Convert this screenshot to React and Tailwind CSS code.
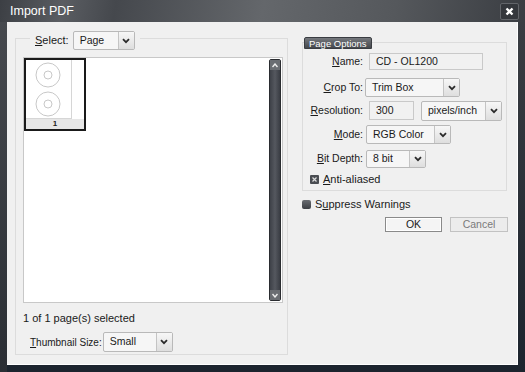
import React from "react";

const font = { fontFamily: '"Liberation Sans", Arial, sans-serif' };

const Chevron = () => (
  <svg width="8" height="6" viewBox="0 0 8 6">
    <path d="M1 1.2 L4 4.2 L7 1.2" fill="none" stroke="#2b2b2b" strokeWidth="1.8" />
  </svg>
);

const Select = ({ w, h = 19, value }) => (
  <div
    className={`flex shrink-0 ${w} border border-[#b9b9b9] bg-[#f6f6f6] rounded-[2px]`}
    style={{ height: h }}
  >
    <div className="flex-1 flex items-center pl-[6px] text-[#1a1a1a] whitespace-nowrap">{value}</div>
    <div className="w-[16px] flex items-center justify-center border-l border-[#c4c4c4] bg-gradient-to-b from-[#f7f7f7] to-[#dedede]">
      <Chevron />
    </div>
  </div>
);

const Input = ({ w, h = 19, value }) => (
  <div
    className={`flex items-center ${w} border border-[#c9c9c9] bg-[#f1f1f1] pl-[6px] text-[#1a1a1a]`}
    style={{ height: h }}
  >
    {value}
  </div>
);

const U = ({ children }) => <span className="underline underline-offset-[1px]">{children}</span>;

const Label = ({ children }) => (
  <div className="w-[62px] shrink-0 text-right pr-[2px] text-[#1a1a1a] whitespace-nowrap">{children}</div>
);

const Disc = ({ cy }) => (
  <g>
    <circle cx="22" cy={cy} r="12" fill="none" stroke="#c8c8c8" />
    <circle cx="22" cy={cy} r="4" fill="none" stroke="#c8c8c8" />
  </g>
);

export default function App() {
  return (
    <div className="w-[525px] h-[372px] flex flex-col bg-[#2c3036] text-[10.5px]" style={font}>
      {/* title bar */}
      <div className="h-[22px] flex items-center justify-between pl-[10px] pr-[6px] bg-[linear-gradient(100deg,#3c3f44_0%,#5a5d62_12%,#45484d_22%,#64676b_50%,#55585c_75%,#3a3d42_100%)]">
        <span className="text-white text-[12.5px] leading-none">Import PDF</span>
        <div className="w-[19px] h-[17px] mt-[1px] rounded-[2px] bg-[#34373c] border border-[#62656a] flex items-center justify-center">
          <svg width="9" height="9" viewBox="0 0 9 9">
            <path d="M1.5 1.5 L7.5 7.5 M7.5 1.5 L1.5 7.5" stroke="#fff" strokeWidth="2.3" />
          </svg>
        </div>
      </div>

      {/* body */}
      <div className="flex-1 flex bg-[#1c242e]">
        <div className="w-[7px] bg-gradient-to-b from-[#46494e] to-[#2a2e34]" />
        <div className="w-[511px] h-[343px] bg-[#f0f0f0] border-r border-b border-white flex">
          {/* left group */}
          <div className="ml-[8px] mt-[16px] w-[273px] h-[317px] border border-[#dcdcdc] flex flex-col">
            <div className="-mt-[8px] ml-[14px] flex items-center gap-[4px] bg-[#f0f0f0] self-start px-[5px]">
              <span className="text-[#1a1a1a] text-[11px]"><U>S</U>elect:</span>
              <Select w="w-[62px]" value="Page" />
            </div>
            <div className="ml-[7px] mt-[7px] w-[260px] h-[246px] shrink-0 border border-[#c8c8c8] bg-white flex">
              <div className="flex-1">
                <div className="w-[62px] h-[73px] border-2 border-[#1a1a1a] bg-white flex flex-col">
                  <div className="flex-1 flex">
                    <div className="w-[46px] border-r border-b border-[#d6d6d6]">
                      <svg width="45" height="58" viewBox="0 0 45 58">
                        <Disc cy="15" />
                        <Disc cy="44" />
                      </svg>
                    </div>
                  </div>
                  <div className="h-[10px] bg-[#e6e6e6] text-[8px] leading-[10px] text-center font-bold text-[#222]">1</div>
                </div>
              </div>
              <div className="w-[12px] m-[1px] rounded-[2px] bg-gradient-to-r from-[#3e4148] via-[#55585f] to-[#3a3d44] border border-[#2a2c30] flex flex-col justify-between">
                <div className="h-[10px] flex items-center justify-center bg-[#6a6d72]">
                  <svg width="6" height="5" viewBox="0 0 6 5"><path d="M0.5 4 L3 1 L5.5 4" fill="none" stroke="#eee" strokeWidth="1.4" /></svg>
                </div>
                <div className="h-[10px] flex items-center justify-center bg-[#6a6d72]">
                  <svg width="6" height="5" viewBox="0 0 6 5"><path d="M0.5 1 L3 4 L5.5 1" fill="none" stroke="#eee" strokeWidth="1.4" /></svg>
                </div>
              </div>
            </div>
            <div className="ml-[7px] mt-[7px] text-[#1a1a1a] text-[11px] leading-[16px]">1 of 1 page(s) selected</div>
            <div className="ml-[14px] mt-[6px] flex items-center gap-[1px]">
              <span className="shrink-0 whitespace-nowrap text-[#1a1a1a] text-[10px]"><U>T</U>humbnail Size:</span>
              <Select w="w-[70px]" h={20} value="Small" />
            </div>
          </div>

          {/* right column */}
          <div className="ml-[14px] w-[206px] flex flex-col">
            <div className="mt-[20px] w-[205px] pb-[5px] border border-[#dcdcdc] flex flex-col">
              <div className="-mt-[6px] ml-[1px] self-start h-[12px] px-[4px] rounded-t-[2px] bg-gradient-to-b from-[#75787d] to-[#45484d] text-white text-[9.5px] leading-[11px] border border-[#3a3d42]">
                Page Options
              </div>
              <div className="mt-[4px] flex items-center h-[17px]">
                <Label><U>N</U>ame:</Label>
                <div className="ml-[4px]"><Input w="w-[114px]" h={17} value="CD - OL1200" /></div>
              </div>
              <div className="mt-[8px] flex items-center h-[19px]">
                <Label><U>C</U>rop To:</Label>
                <Select w="w-[95px]" value="Trim Box" />
              </div>
              <div className="mt-[4px] flex items-center h-[19px]">
                <Label><U>R</U>esolution:</Label>
                <div className="ml-[4px]"><Input w="w-[45px]" value="300" /></div>
                <div className="ml-[7px]"><Select w="w-[81px]" h={20} value="pixels/inch" /></div>
              </div>
              <div className="mt-[5px] flex items-center h-[19px]">
                <Label><U>M</U>ode:</Label>
                <div className="ml-[1px]"><Select w="w-[85px]" value="RGB Color" /></div>
              </div>
              <div className="mt-[6px] flex items-center h-[18px]">
                <Label><U>B</U>it Depth:</Label>
                <div className="ml-[1px]"><Select w="w-[60px]" h={18} value="8 bit" /></div>
              </div>
              <div className="mt-[5px] ml-[7px] h-[12px] flex items-center gap-[4px] text-[#1a1a1a] leading-none">
                <div className="w-[9px] h-[9px] rounded-[1px] bg-[#4a4d52] flex items-center justify-center">
                  <svg width="5" height="5" viewBox="0 0 5 5"><path d="M0.5 0.5 L4.5 4.5 M4.5 0.5 L0.5 4.5" stroke="#ddd" strokeWidth="1.2" /></svg>
                </div>
                <span className="text-[11px]"><U>A</U>nti-aliased</span>
              </div>
            </div>
            <div className="mt-[7px] h-[12px] flex items-center gap-[4px] text-[#1a1a1a] leading-none">
              <div className="w-[9px] h-[9px] rounded-[2px] bg-gradient-to-b from-[#6a6d72] to-[#3c3f44]" />
              <span className="text-[11px]">S<U>u</U>ppress Warnings</span>
            </div>
            <div className="mt-[7px] flex gap-[8px] justify-end">
              <button className="w-[57px] h-[15px] border border-[#8a8a8a] bg-[#f4f4f4] text-[#1a1a1a] text-[10.5px] leading-[13px] shadow-[inset_0_0_0_1px_#fff]">OK</button>
              <button className="w-[58px] h-[15px] border border-[#c2c2c2] bg-[#ececec] text-[#7a7a7a] text-[10.5px] leading-[13px]">Cancel</button>
            </div>
          </div>
        </div>
        <div className="flex-1 bg-gradient-to-b from-[#3a3d42] to-[#1c242e]" />
      </div>
    </div>
  );
}
